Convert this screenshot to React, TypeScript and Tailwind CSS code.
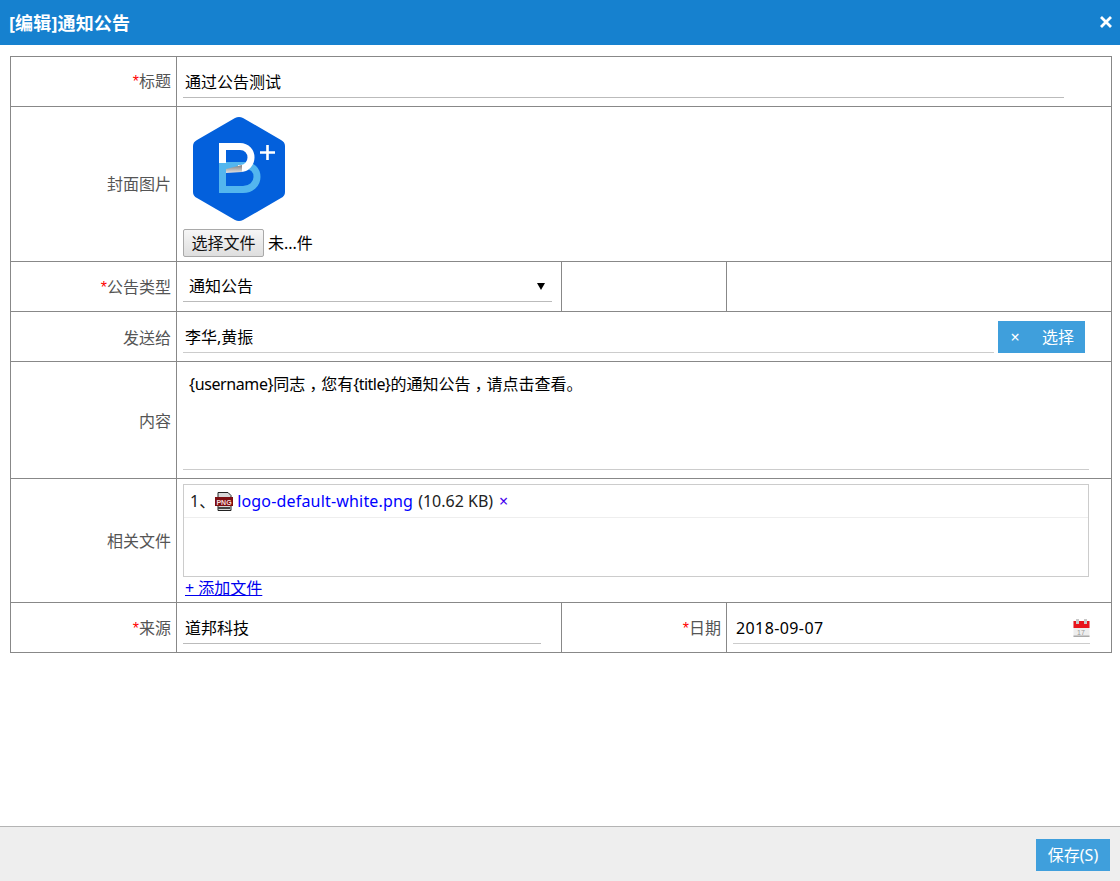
const FONT = "font-['Noto_Sans','Noto_Sans_CJK_SC',sans-serif]";

function Label({ text, req = false, lift = false }: { text: string; req?: boolean; lift?: boolean }) {
  return (
    <td className={`border border-[#888888] p-0 pr-[5px] text-right align-middle text-[16px] text-[#555555] ${lift ? "pt-0" : "pt-[2px]"}`}>
      {req && <span className="font-['Liberation_Sans',sans-serif] text-[#ff0000]">*</span>}
      {text}
    </td>
  );
}

function Logo() {
  return (
    <svg width="92" height="104" viewBox="0 0 92 104">
      <defs>
        <linearGradient id="fold" x1="0" y1="0" x2="0" y2="1">
          <stop offset="0" stopColor="#7f7f7f" />
          <stop offset="1" stopColor="#e4e4e4" />
        </linearGradient>
      </defs>
      <path d="M46 0 Q48 0 50 1 L88 23 Q92 25 92 29 L92 75 Q92 79 88 81 L50 103 Q46 105 42 103 L4 81 Q0 79 0 75 L0 29 Q0 25 4 23 L42 1 Q44 0 46 0 Z" fill="#0360dc" />
      <path d="M29.5 46 V72.5 H50 C58 72.5 64 67 64 60 C64 53 59 48.5 52 48.5 H33" fill="none" stroke="#53b6ee" strokeWidth="7" />
      <path d="M29.5 46 V29.5 H47 C54 29.5 58 35 58 40.5 C58 46 54 51.5 47 51.5 H45" fill="none" stroke="#ffffff" strokeWidth="7" />
      <path d="M33 52 L49 48 L49 55 L33 56 Z" fill="url(#fold)" />
      <path d="M67 35.5 H82 M74.5 28 V43" stroke="#ffffff" strokeWidth="2.6" fill="none" />
    </svg>
  );
}

function PngIcon() {
  return (
    <svg width="18" height="19" viewBox="0 0 18 19" className="shrink-0">
      <path d="M3 .5 H13 L16 3.5 V18.5 H3 Z" fill="#d8d8d8" stroke="#222222" />
      <rect x="0" y="5" width="18" height="9" fill="#7d0d10" />
      <rect x="3" y="15" width="12" height="2" fill="#444444" />
      <text x="9" y="12.5" textAnchor="middle" fontSize="7" fontWeight="700" fill="#f4dcdc" fontFamily="Liberation Sans, sans-serif">PNG</text>
    </svg>
  );
}

function Calendar() {
  return (
    <svg width="17" height="18" viewBox="0 0 17 18" className="shrink-0">
      <rect x="0.5" y="2" width="16" height="16" fill="#eeeeee" />
      <rect x="0.5" y="2" width="16" height="7" fill="#e8141c" />
      <rect x="3" y="0" width="3" height="5" fill="#c8c8c8" />
      <rect x="11" y="0" width="3" height="5" fill="#c8c8c8" />
      <rect x="0.5" y="16.5" width="16" height="1.5" fill="#aaaaaa" />
      <text x="8" y="15.5" textAnchor="middle" fontSize="7" fill="#999999" fontFamily="Liberation Sans, sans-serif">17</text>
    </svg>
  );
}

function Comma() {
  return <span className="inline-block translate-y-[5px] font-['Noto_Sans_CJK_TC',sans-serif]">，</span>;
}

export default function App() {
  return (
    <div className={`flex h-[881px] w-[1120px] flex-col overflow-hidden bg-white text-[16px] text-black ${FONT}`}>
      <header className="flex h-[45px] shrink-0 items-center justify-between bg-[#1681cf] pl-[9px] pr-[7px] text-white">
        <h1 className="pt-[2px] text-[18px] font-bold tracking-[0.15px]">[编辑]通知公告</h1>
        <svg width="14" height="14" viewBox="0 0 14 14" className="mb-[2px]">
          <path d="M2 2 L12 12 M12 2 L2 12" stroke="#ffffff" strokeWidth="2.8" />
        </svg>
      </header>

      <main className="flex-1 pl-[10px] pt-[11px]">
        <table className="w-[1101px] table-fixed border-collapse">
          <colgroup>
            <col className="w-[166px]" />
            <col className="w-[385px]" />
            <col className="w-[165px]" />
            <col className="w-[385px]" />
          </colgroup>
          <tbody>
            <tr className="h-[50px]">
              <Label text="标题" req lift />
              <td colSpan={3} className="border border-[#888888] px-[6px] align-top">
                <div className="mt-[8px] flex h-[33px] w-[881px] items-center border-b border-[#bbbbbb] pl-[2px] pt-[2px]">通过公告测试</div>
              </td>
            </tr>
            <tr className="h-[155px]">
              <Label text="封面图片" lift />
              <td colSpan={3} className="border border-[#888888] px-[6px] align-top">
                <div className="ml-[10px] mt-[10px] flex h-[104px]"><Logo /></div>
                <div className="mt-[8px] flex items-center gap-[4px]">
                  <button className="flex h-[28px] w-[81px] items-center justify-center rounded-[2px] border border-[#a9a9a9] bg-gradient-to-b from-[#f6f6f6] to-[#dedede] text-[16px] text-[#111111]">选择文件</button>
                  <span className="text-[16px]">未...件</span>
                </div>
              </td>
            </tr>
            <tr className="h-[50px]">
              <Label text="公告类型" req />
              <td className="border border-[#888888] px-[6px] align-top">
                <div className="mt-[7px] flex h-[33px] w-[369px] items-center justify-between border-b border-[#bbbbbb] pl-[6px] pr-[7px] pt-[2px]">
                  <span>通知公告</span>
                  <svg width="8" height="8" viewBox="0 0 8 8"><path d="M0 1 H8 L4 8 Z" fill="#000000" /></svg>
                </div>
              </td>
              <td className="border border-[#888888]" />
              <td className="border border-[#888888]" />
            </tr>
            <tr className="h-[50px]">
              <Label text="发送给" />
              <td colSpan={3} className="border border-[#888888] px-[6px] align-middle">
                <div className="flex items-end gap-[4px] pt-[1px]">
                  <div className="flex h-[32px] w-[811px] items-center border-b border-[#cccccc] pl-[2px] pt-[1px]">李华,黄振</div>
                  <div className="flex h-[32px] w-[87px] items-center bg-[#3f9fdc] text-[16px] text-white">
                    <span className="w-[34px] text-center">×</span>
                    <span className="ml-[10px]">选择</span>
                  </div>
                </div>
              </td>
            </tr>
            <tr className="h-[117px]">
              <Label text="内容" />
              <td colSpan={3} className="border border-[#888888] px-[6px] align-top">
                <div className="h-[108px] w-[906px] border-b border-[#cccccc] pl-[6px] pt-[9px] leading-[24px]">
                  <span className="tracking-[-0.4px]">{"{username}"}</span>同志<Comma />您有<span className="tracking-[-0.55px]">{"{title}"}</span>的通知公告<Comma />请点击查看。
                </div>
              </td>
            </tr>
            <tr className="h-[124px]">
              <Label text="相关文件" lift />
              <td colSpan={3} className="border border-[#888888] px-[6px] pt-[5px] align-top">
                <div className="h-[93px] w-[906px] border border-[#cccccc]">
                  <div className="flex h-[33px] items-center border-b border-[#eeeeee] pl-[6px] text-[#222222]">
                    <span>1、</span>
                    <PngIcon />
                    <span className="ml-[4px] tracking-[0.18px] text-[#0000ff]">logo-default-white.png</span>
                    <span className="ml-[5px]">(10.62 KB)</span>
                    <span className="ml-[6px] text-[#4400ee]">×</span>
                  </div>
                </div>
                <a className="ml-[2px] block w-fit text-[16px] leading-[22px] text-[#0000ee] underline">+ 添加文件</a>
              </td>
            </tr>
            <tr className="h-[50px]">
              <Label text="来源" req />
              <td className="border border-[#888888] px-[6px] align-middle">
                <div className="flex h-[33px] w-[358px] items-center border-b border-[#bbbbbb] pl-[2px] pt-[2px]">道邦科技</div>
              </td>
              <Label text="日期" req />
              <td className="border border-[#888888] px-[6px] align-middle">
                <div className="flex h-[33px] w-[357px] items-center justify-between border-b border-[#cccccc] pl-[3px] pt-[2px]">
                  <span className="tracking-[0.4px]">2018-09-07</span>
                  <Calendar />
                </div>
              </td>
            </tr>
          </tbody>
        </table>
      </main>

      <footer className="flex h-[55px] shrink-0 items-center justify-end border-t border-[#b4b4b4] bg-[#eeeeee] pr-[10px]">
        <button className="mt-[1px] flex h-[32px] w-[74px] items-center justify-center bg-[#3f9fdc] text-[16px] text-white">保存(S)</button>
      </footer>
    </div>
  );
}
